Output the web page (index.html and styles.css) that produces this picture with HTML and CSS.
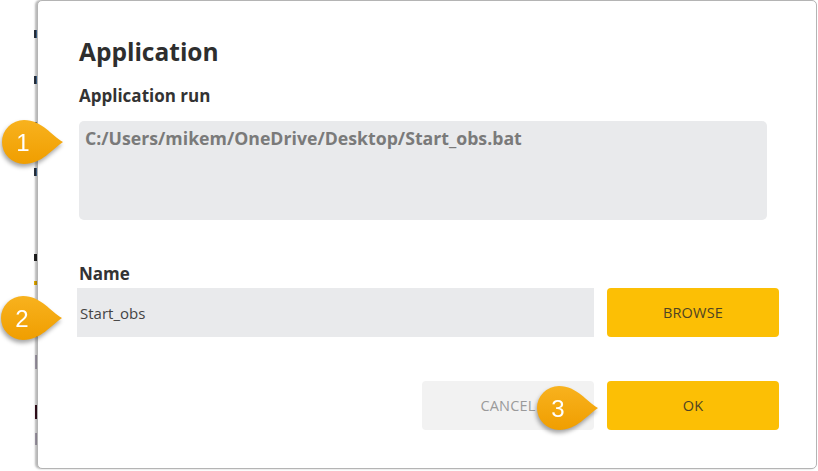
FILE: index.html
```html
<!DOCTYPE html>
<html>
<head>
<meta charset="utf-8">
<link rel="stylesheet" href="styles.css">
</head>
<body>
<div class="page">
  <div class="bgstrip">
    <span class="frag f1"></span>
    <span class="frag f2"></span>
    <span class="frag f3"></span>
    <span class="frag f4"></span>
    <span class="frag f5"></span>
    <span class="frag f6 yellow"></span>
    <span class="frag f7"></span>
    <span class="frag f8 pale"></span>
    <span class="frag f9 dark"></span>
    <span class="frag f10 pale"></span>
  </div>
  <div class="dialog">
    <h1 class="title">Application</h1>
    <div class="label label-run">Application run</div>
    <div class="pathbox">C:/Users/mikem/OneDrive/Desktop/Start_obs.bat</div>
    <div class="label label-name">Name</div>
    <div class="row">
      <div class="input">Start_obs</div>
      <div class="btn btn-yellow">BROWSE</div>
    </div>
    <div class="row row-actions">
      <div class="btn btn-grey">CANCEL</div>
      <div class="btn btn-yellow">OK</div>
    </div>
  </div>
</div>

<svg class="callout c1" width="70" height="56" viewBox="0 0 70 56">
  <defs>
    <linearGradient id="g" x1="0" y1="0" x2="0" y2="1">
      <stop offset="0" stop-color="#f8b21e"/>
      <stop offset="1" stop-color="#f09e00"/>
    </linearGradient>
  </defs>
  <path d="M 63 22 C 52 16, 42 0, 24 0 A 22 22 0 1 0 24 44 C 42 44, 52 29, 63 22 Z" fill="url(#g)"/>
  <text x="23" y="31" class="num">1</text>
</svg>
<svg class="callout c2" width="70" height="56" viewBox="0 0 70 56">
  <path d="M 63 22 C 52 16, 42 0, 24 0 A 22 22 0 1 0 24 44 C 42 44, 52 29, 63 22 Z" fill="url(#g)"/>
  <text x="23" y="31" class="num">2</text>
</svg>
<svg class="callout c3" width="70" height="56" viewBox="0 0 70 56">
  <path d="M 63 22 C 52 16, 42 0, 24 0 A 22 22 0 1 0 24 44 C 42 44, 52 29, 63 22 Z" fill="url(#g)"/>
  <text x="23" y="31" class="num">3</text>
</svg>
</body>
</html>
```

FILE: styles.css
```css
html, body {
  margin: 0;
  padding: 0;
  background: #ffffff;
}
body {
  width: 818px;
  height: 471px;
  overflow: hidden;
  position: relative;
  font-family: "Open Sans", "Noto Sans", sans-serif;
}
.page {
  display: flex;
  align-items: flex-start;
}
.bgstrip {
  width: 37px;
  flex: none;
  display: flex;
  flex-direction: column;
  align-items: flex-end;
  padding-top: 30px;
}
.frag {
  display: block;
  width: 2px;
  height: 8px;
  background: #2a3340;
  border-right: 1px solid #4a7ab0;
}
.f2, .f3, .f4 { margin-top: 38px; }
.f5 { margin-top: 78px; height: 7px; background: #222; border: 0; width: 3px; }
.f6 { margin-top: 20px; height: 4px; }
.f7 { margin-top: 42px; height: 10px; background: #1e2a60; border: 0; }
.f8 { margin-top: 18px; height: 14px; }
.f9 { margin-top: 36px; height: 14px; }
.f10 { margin-top: 14px; height: 12px; }
.yellow { background: #f0b400; border: 0; width: 3px; }
.pale { background: #b8b0c0; border: 0; }
.dark { background: #3a1020; border: 0; }

.dialog {
  flex: none;
  width: 780px;
  height: 469px;
  box-sizing: border-box;
  background: #ffffff;
  border: 1px solid #b4b4b4;
  border-radius: 5px;
  box-shadow: -2px 0 2px rgba(0, 0, 0, 0.28);
  padding: 35px 0 0 41px;
  display: flex;
  flex-direction: column;
  color: #333333;
}
.title {
  margin: 0;
  font-size: 24.5px;
  line-height: 32px;
  font-weight: 700;
  color: #2e2e2e;
}
.label {
  font-size: 17px;
  line-height: 22px;
  font-weight: 700;
  color: #333333;
}
.label-run {
  margin-top: 17px;
}
.pathbox {
  margin-top: 14px;
  width: 688px;
  height: 99px;
  box-sizing: border-box;
  background: #e9eaec;
  border-radius: 5px;
  padding: 5px 6px;
  font-size: 17.7px;
  line-height: 24px;
  font-weight: 700;
  color: #7a7a7a;
}
.label-name {
  margin-top: 43px;
}
.row {
  display: flex;
  gap: 13px;
  margin-top: 3px;
  margin-left: -2px;
}
.row-actions {
  margin-top: 44px;
  margin-left: 343px;
}
.input {
  width: 517px;
  height: 49px;
  box-sizing: border-box;
  background: #e9eaec;
  padding-left: 3px;
  display: flex;
  align-items: center;
  font-size: 15px;
  color: #444444;
}
.btn {
  width: 172px;
  height: 49px;
  box-sizing: border-box;
  border-radius: 4px;
  display: flex;
  align-items: center;
  justify-content: center;
  font-size: 14.5px;
  letter-spacing: 0.2px;
}
.btn-yellow {
  background: #fcbf05;
  color: #4e4323;
}
.btn-grey {
  background: #f2f2f2;
  color: #9a9a9a;
}

.callout {
  position: absolute;
  overflow: visible;
  filter: drop-shadow(-1px 3px 2px rgba(0, 0, 0, 0.35));
}
.c1 { left: 0; top: 120px; }
.c2 { left: -1px; top: 296px; }
.c3 { left: 535px; top: 386px; }
.num {
  font-family: "Liberation Sans", Arial, sans-serif;
  font-size: 24px;
  fill: #ffffff;
  text-anchor: middle;
}
```
